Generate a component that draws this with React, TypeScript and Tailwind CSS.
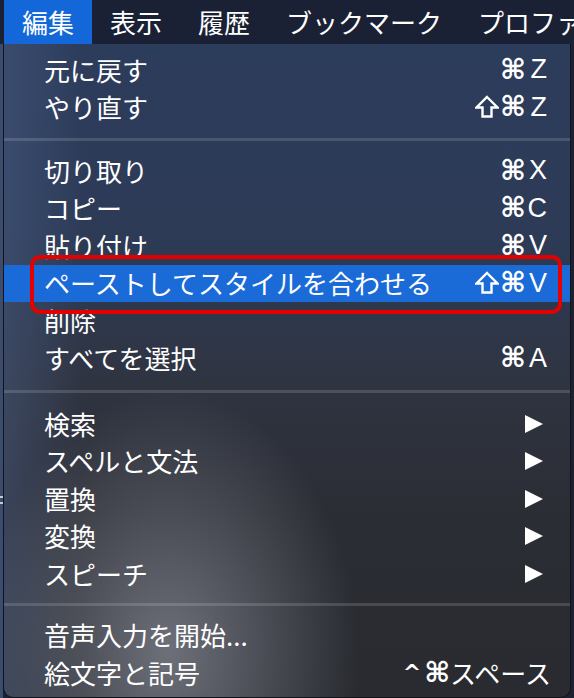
import React from "react";

type Item =
  | { kind: "row"; label: string; shortcut?: string; shift?: boolean; arrow?: boolean; active?: boolean }
  | { kind: "sep"; h: string };

const items: Item[] = [
  { kind: "row", label: "元に戻す", shortcut: "Z" },
  { kind: "row", label: "やり直す", shift: true, shortcut: "Z" },
  { kind: "sep", h: "h-[26px]" },
  { kind: "row", label: "切り取り", shortcut: "X" },
  { kind: "row", label: "コピー", shortcut: "C" },
  { kind: "row", label: "貼り付け", shortcut: "V" },
  { kind: "row", label: "ペーストしてスタイルを合わせる", shift: true, shortcut: "V", active: true },
  { kind: "row", label: "削除" },
  { kind: "row", label: "すべてを選択", shortcut: "A" },
  { kind: "sep", h: "h-[28px]" },
  { kind: "row", label: "検索", arrow: true },
  { kind: "row", label: "スペルと文法", arrow: true },
  { kind: "row", label: "置換", arrow: true },
  { kind: "row", label: "変換", arrow: true },
  { kind: "row", label: "スピーチ", arrow: true },
  { kind: "sep", h: "h-[24px]" },
  { kind: "row", label: "音声入力を開始..." },
];

function Arrow() {
  return (
    <svg width="18" height="18" viewBox="0 0 18 18" className="mr-[4px]">
      <polygon points="0,0 18,9 0,18" fill="#ffffff" />
    </svg>
  );
}

function Shift() {
  return (
    <svg width="24" height="24" viewBox="0 0 24 24" className="mr-[1px]">
      <polygon
        points="12,2 22.5,12.5 16.5,12.5 16.5,21.5 7.5,21.5 7.5,12.5 1.5,12.5"
        fill="none"
        stroke="#ffffff"
        strokeWidth="2.4"
        strokeLinejoin="miter"
      />
    </svg>
  );
}

function Cmd() {
  return <span className="font-['DejaVu_Sans',sans-serif] font-bold text-[28px] leading-none">⌘</span>;
}

export default function App() {
  return (
    <div className="w-[574px] h-[698px] flex flex-col bg-[#1c2134] relative overflow-hidden font-['Noto_Sans_CJK_JP',sans-serif] text-white">
      {/* menu bar */}
      <div className="h-[44px] flex items-stretch bg-[#1b2135] pl-[4px] text-[26px] leading-none whitespace-nowrap">
        <div className="flex items-center px-[18px] bg-[#1367d8]">編集</div>
        <div className="flex items-center px-[18px]">表示</div>
        <div className="flex items-center px-[18px]">履歴</div>
        <div className="flex items-center px-[18px]">ブックマーク</div>
        <div className="flex items-center px-[18px]">プロファ</div>
      </div>

      <div className="flex flex-1 min-h-0">
        <div className="w-[3px] bg-[#3b4d6e] relative">
          <div className="absolute left-0 top-[452px] w-[3px] h-[2px] bg-white/70" />
          <div className="absolute left-0 top-[458px] w-[3px] h-[2px] bg-white/70" />
          <div className="absolute left-0 top-[686px] w-[3px] h-[2px] bg-white/70" />
          <div className="absolute left-0 top-[692px] w-[3px] h-[2px] bg-white/70" />
        </div>
        <div className="flex-1 flex flex-col border-x border-b border-[#12141a] rounded-b-[10px] pt-[7px] text-[26px] leading-none bg-[radial-gradient(ellipse_190px_260px_at_29%_93%,rgba(125,129,139,0.8),rgba(125,129,139,0)),linear-gradient(90deg,rgba(75,95,135,0.45)_0%,rgba(75,95,135,0)_14%),linear-gradient(180deg,#2c3c5b_0%,#2d3b57_28%,#2f3441_52%,#2b2d34_72%,#292b31_100%)]">
          {items.map((it, i) =>
            it.kind === "sep" ? (
              <div key={i} className={`${it.h} flex items-center`}>
                <div className="h-[3px] w-full bg-white/[0.14]" />
              </div>
            ) : (
              <div
                key={i}
                className={`h-[37.5px] flex items-center justify-between pl-[40px] pr-[23px] ${it.active ? "bg-[#1a6ad7]" : ""}`}
              >
                <span>{it.label}</span>
                {it.arrow ? (
                  <Arrow />
                ) : it.shortcut ? (
                  <span className="flex items-center">
                    {it.shift ? <Shift /> : null}
                    <Cmd />
                    <span className="w-[21px] text-right font-['Liberation_Sans',sans-serif] text-[27px] leading-none">
                      {it.shortcut}
                    </span>
                  </span>
                ) : null}
              </div>
            )
          )}
          <div className="h-[37.5px] flex items-center justify-between pl-[40px] pr-[19px]">
            <span>絵文字と記号</span>
            <span className="flex items-center">
              <span className="font-['DejaVu_Sans',sans-serif] font-bold text-[22px] mr-[3px]">^</span>
              <Cmd />
              <span>スペース</span>
            </span>
          </div>
        </div>
        <div className="w-[3px] bg-[#1e2230]" />
      </div>

      {/* annotation */}
      <div className="absolute left-[30px] top-[255px] w-[532px] h-[59px] border-[4px] border-[#e50000] rounded-[10px]" />
    </div>
  );
}
